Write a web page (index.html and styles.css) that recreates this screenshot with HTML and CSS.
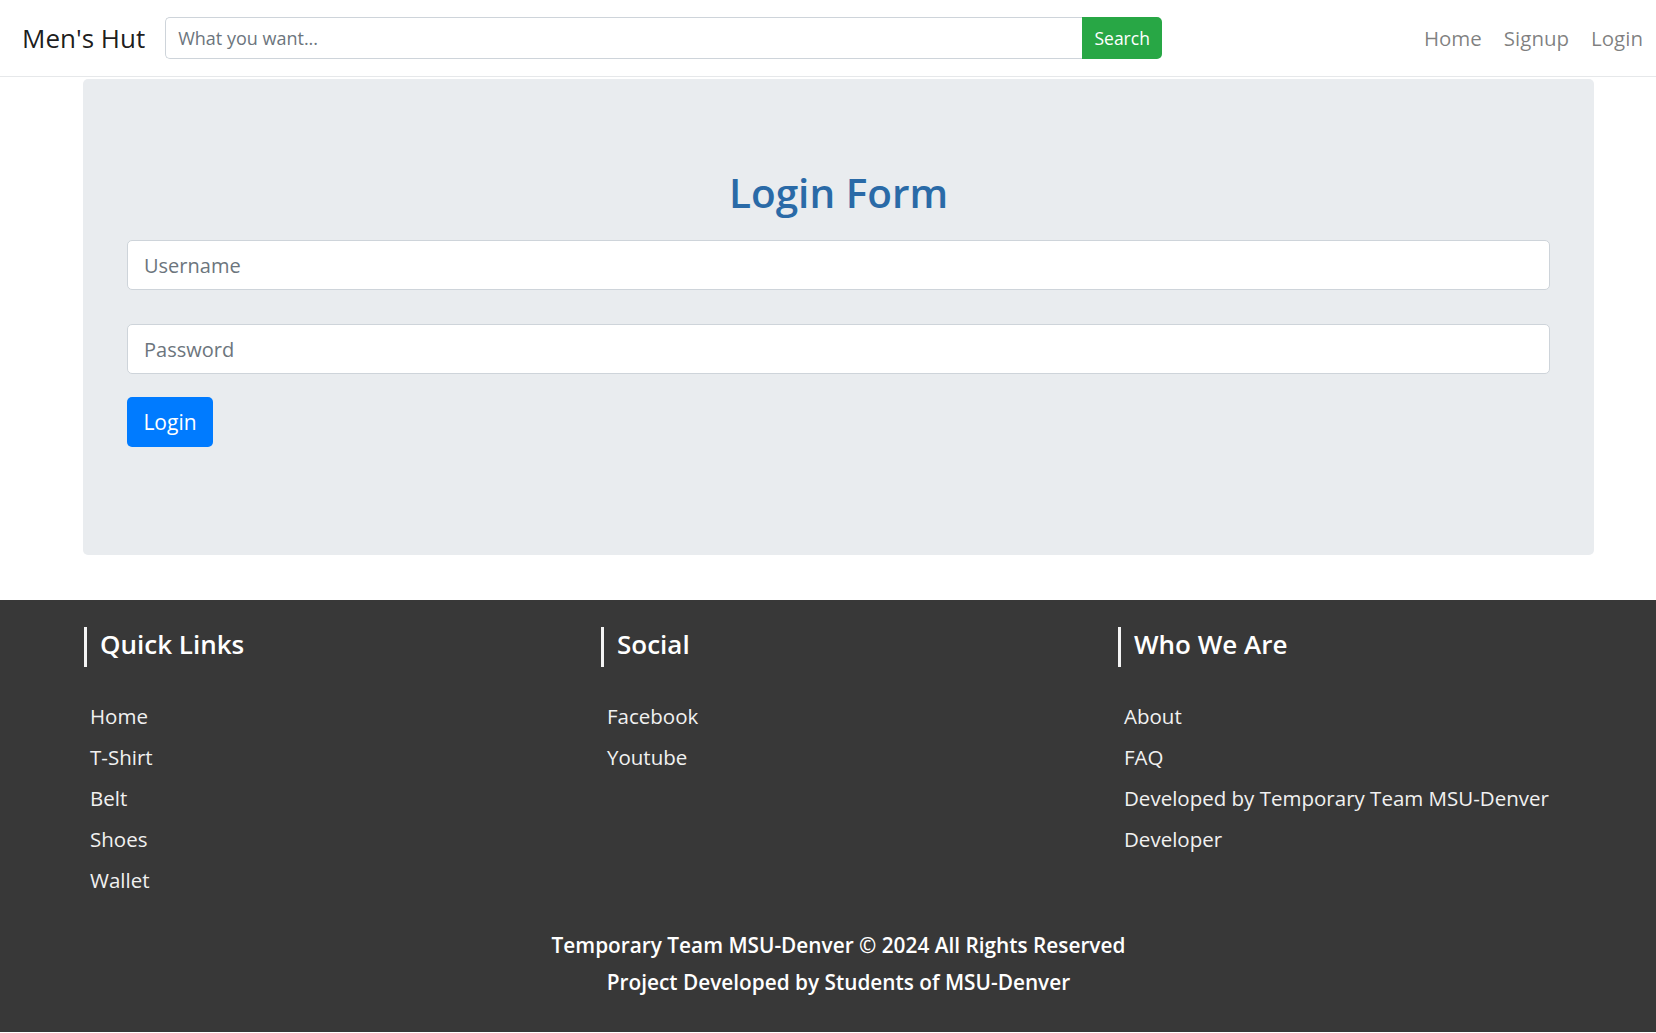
FILE: index.html
```html
<!DOCTYPE html>
<html lang="en">
<head>
<meta charset="utf-8">
<title>Men's Hut - Login</title>
<link rel="stylesheet" href="styles.css">
</head>
<body>
<nav class="navbar">
  <a class="brand" href="#">Men's Hut</a>
  <form class="search">
    <input class="search-input" type="text" placeholder="What you want...">
    <button class="search-btn" type="button">Search</button>
  </form>
  <div class="nav-links">
    <a class="nav-link" href="#">Home</a>
    <a class="nav-link" href="#">Signup</a>
    <a class="nav-link" href="#">Login</a>
  </div>
</nav>

<main class="jumbotron">
  <h1 class="title">Login Form</h1>
  <form class="login-form">
    <input class="field" type="text" placeholder="Username">
    <input class="field" type="password" placeholder="Password">
    <button class="login-btn" type="button">Login</button>
  </form>
</main>

<footer class="footer">
  <div class="cols">
    <div class="col">
      <h3 class="col-title">Quick Links</h3>
      <ul class="links">
        <li>Home</li>
        <li>T-Shirt</li>
        <li>Belt</li>
        <li>Shoes</li>
        <li>Wallet</li>
      </ul>
    </div>
    <div class="col">
      <h3 class="col-title">Social</h3>
      <ul class="links">
        <li>Facebook</li>
        <li>Youtube</li>
      </ul>
    </div>
    <div class="col">
      <h3 class="col-title">Who We Are</h3>
      <ul class="links">
        <li>About</li>
        <li>FAQ</li>
        <li>Developed by Temporary Team MSU-Denver</li>
        <li>Developer</li>
      </ul>
    </div>
  </div>
  <div class="copy">
    <p>Temporary Team MSU-Denver © 2024 All Rights Reserved</p>
    <p>Project Developed by Students of MSU-Denver</p>
  </div>
</footer>
</body>
</html>
```

FILE: styles.css
```css
* { box-sizing: border-box; }

body {
  margin: 0;
  font-family: "Open Sans", "Noto Sans", sans-serif;
  color: #212529;
  background: #fff;
}

.navbar {
  display: flex;
  align-items: center;
  height: 77px;
  padding: 0 2px 0 22px;
  border-bottom: 1px solid #e6e8ea;
}

.brand {
  font-size: 26px;
  color: rgba(0, 0, 0, 0.9);
  text-decoration: none;
  line-height: 1;
}

.search {
  display: flex;
  margin-left: 20px;
  width: 997px;
  height: 42px;
}

.search-input {
  flex: 1;
  height: 42px;
  border: 1px solid #ced4da;
  border-right: none;
  border-radius: 5px 0 0 5px;
  padding: 0 12px;
  font-family: inherit;
  font-size: 18px;
  color: #495057;
  outline: none;
}

.search-input::placeholder { color: #6c757d; }

.search-btn {
  width: 80px;
  height: 42px;
  border: none;
  border-radius: 0 5px 5px 0;
  background: #28a745;
  color: #fff;
  font-family: inherit;
  font-size: 17.5px;
  padding: 0;
}

.nav-links {
  display: flex;
  margin-left: auto;
}

.nav-link {
  padding: 0 11px;
  font-size: 20.5px;
  color: rgba(0, 0, 0, 0.5);
  text-decoration: none;
}

.jumbotron {
  margin: 2px 62px 0 83px;
  background: #e9ecef;
  border-radius: 5px;
  padding: 89px 44px 108px;
}

.title {
  margin: 0 0 22px;
  text-align: center;
  font-size: 40.5px;
  font-weight: 600;
  line-height: 50px;
  color: #2a6aa7;
}

.login-form {
  display: flex;
  flex-direction: column;
  align-items: flex-start;
}

.field {
  width: 100%;
  height: 50px;
  border: 1px solid #ced4da;
  border-radius: 5px;
  background: #fff;
  padding: 0 16px;
  font-family: inherit;
  font-size: 20px;
  outline: none;
}

.field + .field { margin-top: 34px; }
.field::placeholder { color: #6c757d; }

.login-btn {
  margin-top: 23px;
  width: 86px;
  height: 50px;
  border: none;
  border-radius: 5px;
  background: #007bff;
  color: #fff;
  font-family: inherit;
  font-size: 21px;
  padding: 0;
}

.footer {
  margin-top: 45px;
  background: #383838;
  color: #f1f1f1;
  padding: 27px 0 31px;
}

.cols {
  display: grid;
  grid-template-columns: 517px 517px 517px;
  padding-left: 84px;
}

.col-title {
  margin: 0;
  height: 40px;
  line-height: 35px;
  border-left: 3px solid #f4f4f4;
  padding-left: 13px;
  font-size: 26px;
  font-weight: 600;
  color: #fff;
}

.links {
  list-style: none;
  margin: 29px 0 0;
  padding: 0 0 0 6px;
}

.links li {
  font-size: 20.5px;
  line-height: 41px;
  height: 41px;
}

.copy {
  margin: 26px 62px 0 83px;
  text-align: center;
}

.copy p {
  margin: 0;
  font-size: 20.8px;
  font-weight: 600;
  line-height: 37px;
  color: #fff;
}
```
